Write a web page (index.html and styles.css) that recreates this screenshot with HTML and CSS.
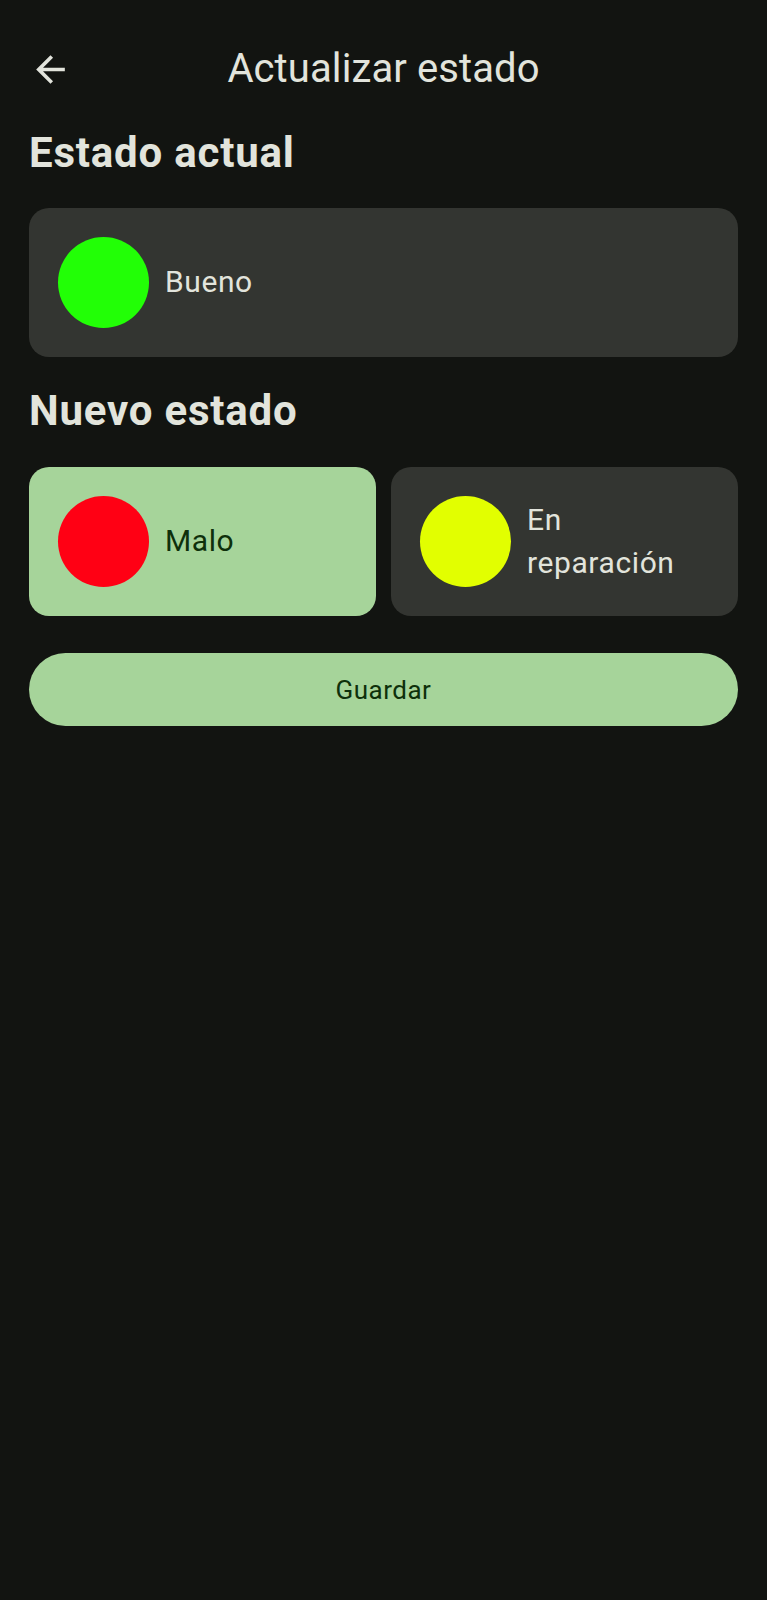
FILE: index.html
```html
<!DOCTYPE html>
<html lang="es">
<head>
<meta charset="utf-8">
<title>Actualizar estado</title>
<link rel="stylesheet" href="styles.css">
</head>
<body>
<div class="screen">
  <header class="topbar">
    <button class="back" aria-label="Atrás">
      <svg viewBox="0 0 24 24" width="43" height="43"><path fill="currentColor" d="M20 11H7.83l5.59-5.59L12 4l-8 8 8 8 1.41-1.41L7.83 13H20v-2z"/></svg>
    </button>
    <h1 class="title">Actualizar estado</h1>
    <span></span>
  </header>

  <h2 class="section first">Estado actual</h2>
  <div class="card">
    <span class="dot dot-green"></span>
    <span class="label">Bueno</span>
  </div>

  <h2 class="section">Nuevo estado</h2>
  <div class="options">
    <div class="card selected">
      <span class="dot dot-red"></span>
      <span class="label">Malo</span>
    </div>
    <div class="card narrow">
      <span class="dot dot-yellow"></span>
      <span class="label">En reparación</span>
    </div>
  </div>

  <button class="save">Guardar</button>
</div>
</body>
</html>
```

FILE: styles.css
```css
html, body {
  margin: 0;
  padding: 0;
  background: #121411;
}
body {
  font-family: Roboto, "Noto Sans", "Liberation Sans", sans-serif;
  color: #e2e4dc;
  min-height: 1600px;
}
.screen {
  padding: 0 29px;
}
.topbar {
  display: grid;
  grid-template-columns: 1fr auto 1fr;
  align-items: center;
  padding-top: 45px;
  height: 48px;
}
.back {
  justify-self: start;
  background: none;
  border: 0;
  padding: 0;
  margin: 0;
  color: #e2e4dc;
  width: 43px;
  height: 43px;
  display: block;
}
.back svg { display: block; }
.title {
  margin: 0;
  font-size: 40px;
  line-height: 48px;
  font-weight: 400;
  color: #e2e4dc;
  letter-spacing: 0.1px;
}
.section {
  margin: 35px 0 30px;
  font-size: 42px;
  line-height: 50px;
  font-weight: 700;
  color: #e2e4dc;
  letter-spacing: 0.8px;
}
.card {
  box-sizing: border-box;
  height: 149px;
  border-radius: 20px;
  background: #333531;
  display: flex;
  align-items: center;
  padding: 0 29px;
  gap: 16px;
}
.dot {
  flex: none;
  width: 91px;
  height: 91px;
  border-radius: 50%;
}
.dot-green { background: #22ff06; }
.dot-red { background: #ff0014; }
.dot-yellow { background: #e2ff00; }
.label {
  font-size: 30px;
  line-height: 42.5px;
  color: #e2e4dc;
  letter-spacing: 0.6px;
}
.card + .section { margin-top: 29px; margin-bottom: 31px; }
.options {
  display: grid;
  grid-template-columns: 1fr 1fr;
  gap: 15px;
}
.options .card { padding-right: 30px; }
.card.selected { background: #a6d49a; }
.card.selected .label { color: #0e300b; }
.save {
  display: block;
  width: 100%;
  margin-top: 37px;
  height: 73px;
  border: 0;
  border-radius: 37px;
  background: #a6d49a;
  color: #0e300b;
  font-family: Roboto, "Noto Sans", "Liberation Sans", sans-serif;
  font-size: 26px;
  font-weight: 400;
  letter-spacing: 0.5px;
}
```
